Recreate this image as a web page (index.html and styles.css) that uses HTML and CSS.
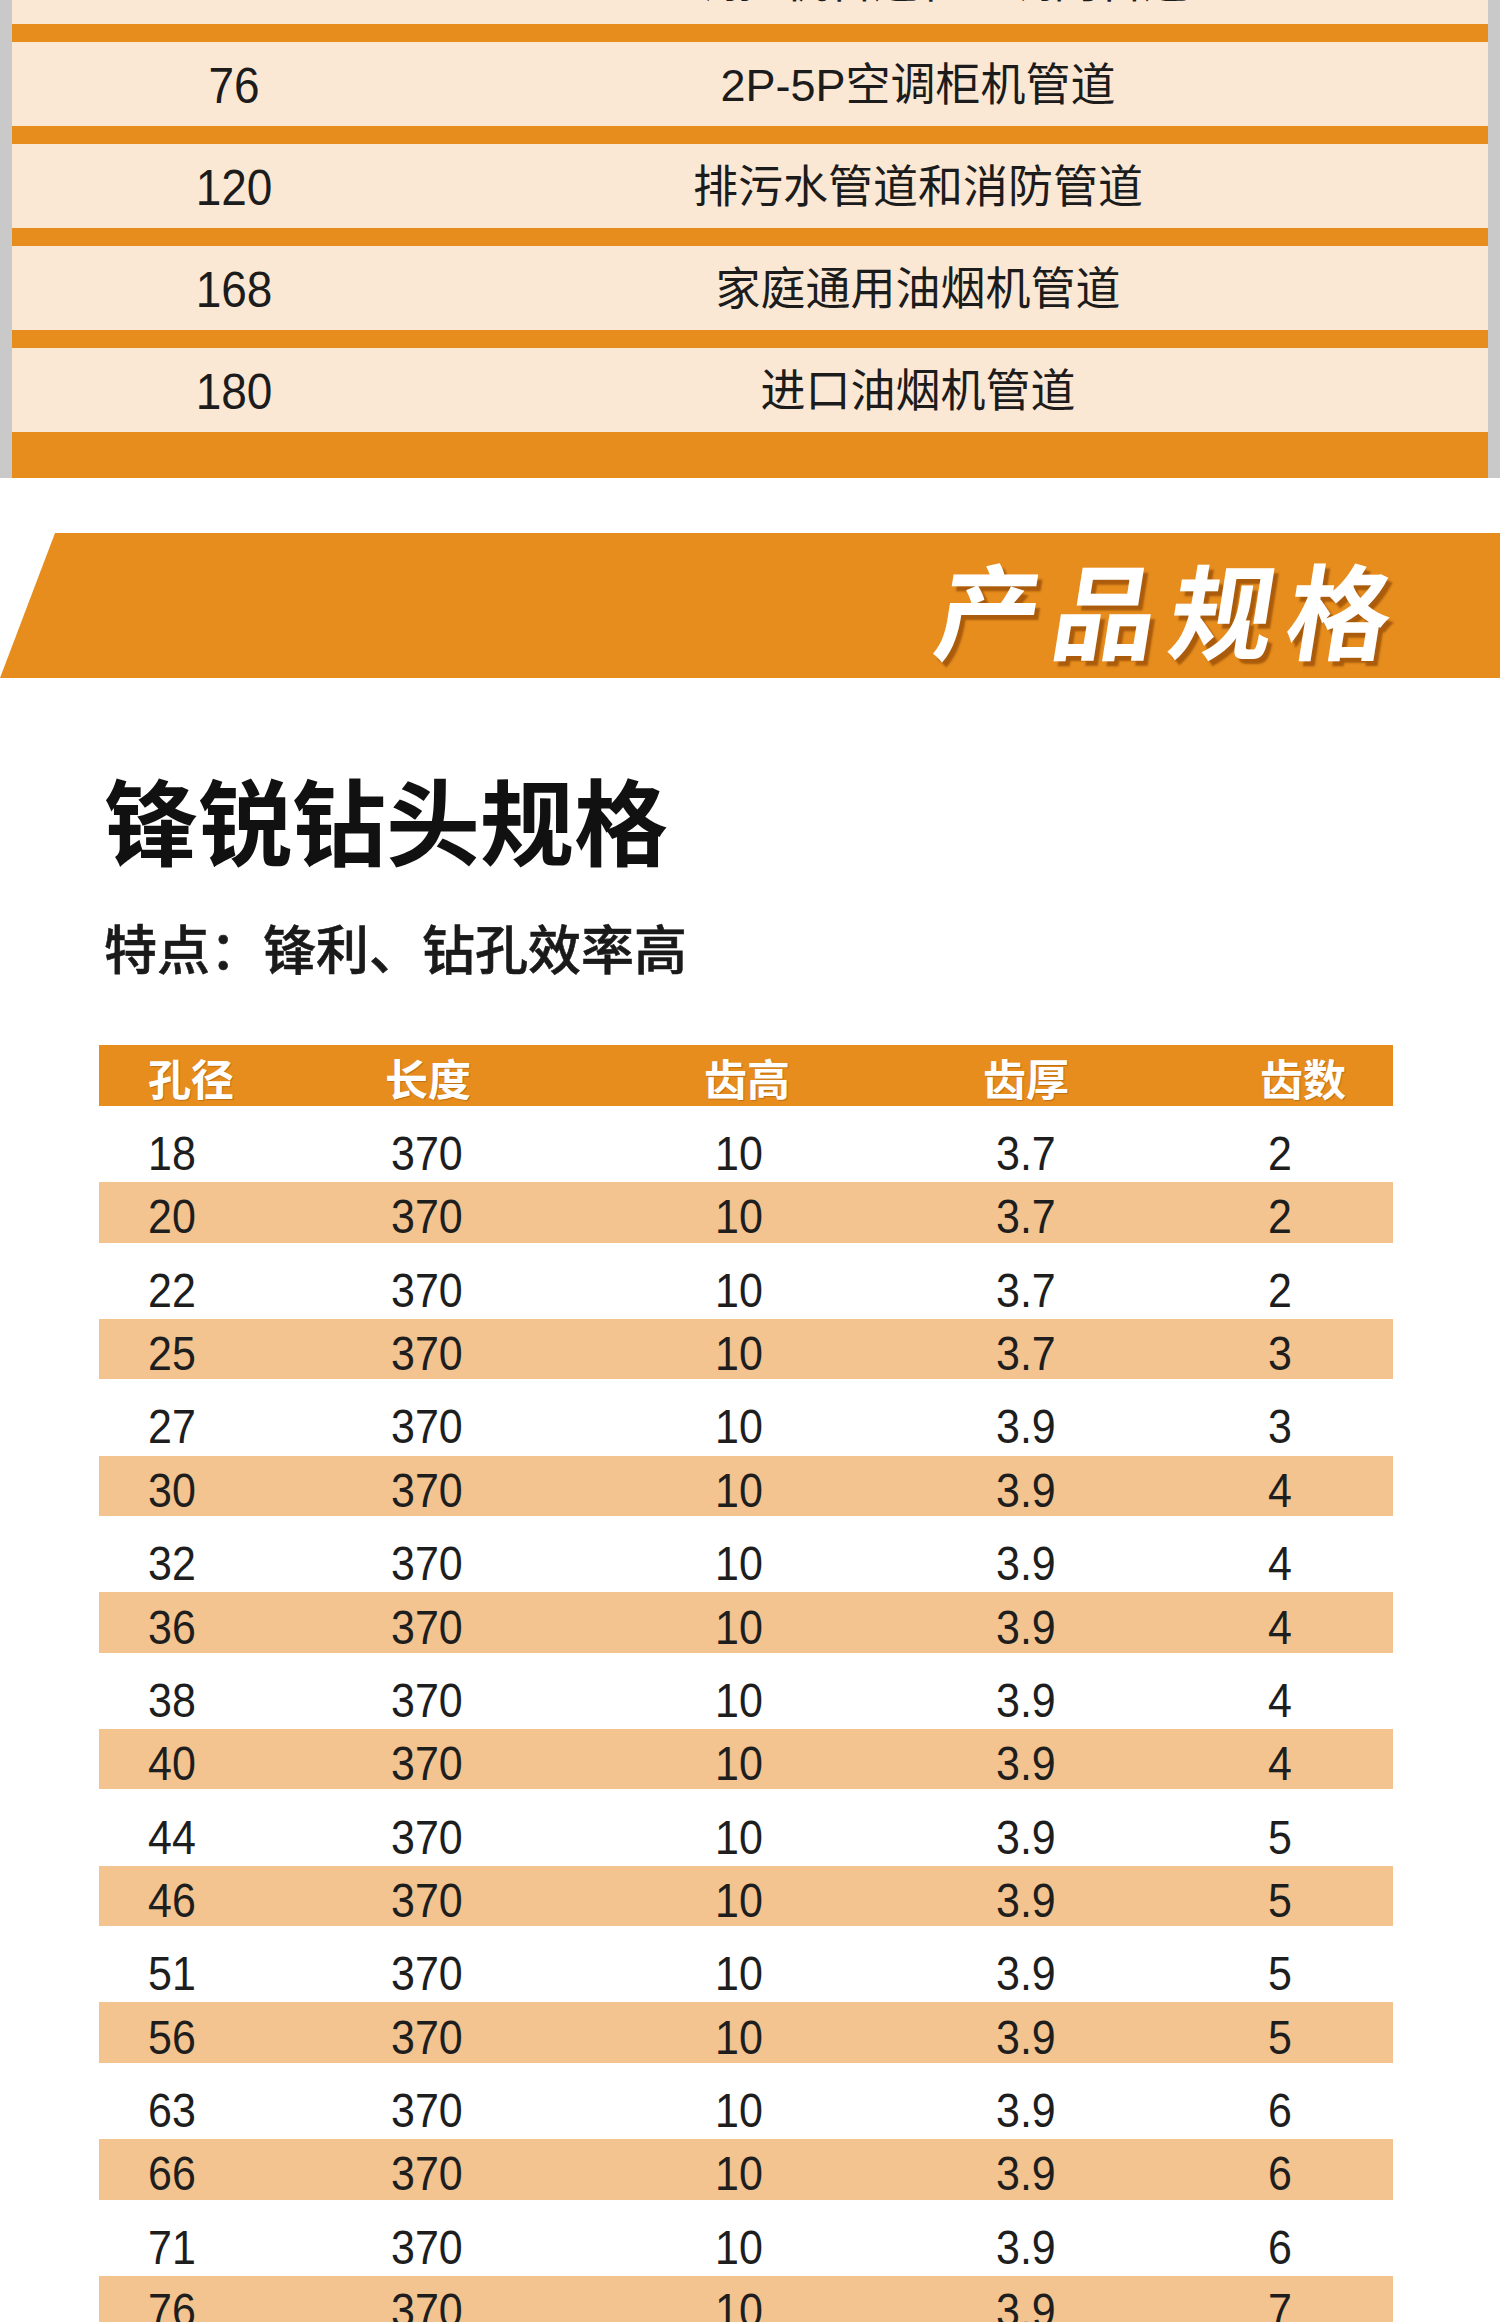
FILE: index.html
```html
<!DOCTYPE html>
<html lang="zh-CN">
<head>
<meta charset="utf-8">
<title>产品规格</title>
<link rel="stylesheet" href="styles.css">
</head>
<body>
<section class="usage">
  <div class="usage-inner">
    <div class="u-row u-row--cut"><div class="u-num">50/63</div><div class="u-desc">空调挂机管道和空调内管道</div></div>
    <div class="u-sep"></div>
    <div class="u-row"><div class="u-num">76</div><div class="u-desc">2P-5P空调柜机管道</div></div>
    <div class="u-sep"></div>
    <div class="u-row"><div class="u-num">120</div><div class="u-desc">排污水管道和消防管道</div></div>
    <div class="u-sep"></div>
    <div class="u-row"><div class="u-num">168</div><div class="u-desc">家庭通用油烟机管道</div></div>
    <div class="u-sep"></div>
    <div class="u-row"><div class="u-num">180</div><div class="u-desc">进口油烟机管道</div></div>
    <div class="u-foot"></div>
  </div>
</section>

<div class="banner"><h2 class="banner-title">产品规格</h2></div>

<section class="spec">
  <h1 class="spec-title">锋锐钻头规格</h1>
  <p class="spec-sub">特点：锋利、钻孔效率高</p>

  <div class="table">
    <div class="thead">
      <div>孔径</div><div>长度</div><div>齿高</div><div>齿厚</div><div>齿数</div>
    </div>
    <div class="tr"><span>18</span><span>370</span><span>10</span><span>3.7</span><span>2</span></div>
    <div class="tr alt"><span>20</span><span>370</span><span>10</span><span>3.7</span><span>2</span></div>
    <div class="tr"><span>22</span><span>370</span><span>10</span><span>3.7</span><span>2</span></div>
    <div class="tr alt"><span>25</span><span>370</span><span>10</span><span>3.7</span><span>3</span></div>
    <div class="tr"><span>27</span><span>370</span><span>10</span><span>3.9</span><span>3</span></div>
    <div class="tr alt"><span>30</span><span>370</span><span>10</span><span>3.9</span><span>4</span></div>
    <div class="tr"><span>32</span><span>370</span><span>10</span><span>3.9</span><span>4</span></div>
    <div class="tr alt"><span>36</span><span>370</span><span>10</span><span>3.9</span><span>4</span></div>
    <div class="tr"><span>38</span><span>370</span><span>10</span><span>3.9</span><span>4</span></div>
    <div class="tr alt"><span>40</span><span>370</span><span>10</span><span>3.9</span><span>4</span></div>
    <div class="tr"><span>44</span><span>370</span><span>10</span><span>3.9</span><span>5</span></div>
    <div class="tr alt"><span>46</span><span>370</span><span>10</span><span>3.9</span><span>5</span></div>
    <div class="tr"><span>51</span><span>370</span><span>10</span><span>3.9</span><span>5</span></div>
    <div class="tr alt"><span>56</span><span>370</span><span>10</span><span>3.9</span><span>5</span></div>
    <div class="tr"><span>63</span><span>370</span><span>10</span><span>3.9</span><span>6</span></div>
    <div class="tr alt"><span>66</span><span>370</span><span>10</span><span>3.9</span><span>6</span></div>
    <div class="tr"><span>71</span><span>370</span><span>10</span><span>3.9</span><span>6</span></div>
    <div class="tr alt"><span>76</span><span>370</span><span>10</span><span>3.9</span><span>7</span></div>
  </div>
</section>
</body>
</html>
```

FILE: styles.css
```css
* { box-sizing: border-box; }

html, body {
  margin: 0;
  padding: 0;
  background: #ffffff;
}

body {
  width: 1500px;
  font-family: "Liberation Sans", "Noto Sans CJK SC", sans-serif;
  color: #1e1e1e;
}

/* ---------- top usage table ---------- */
.usage {
  background: #c9c9c9;
  padding: 0 12px;
  overflow: hidden;
}

.usage-inner {
  background: #fbe8d4;
}

.u-row {
  height: 84px;
  display: grid;
  grid-template-columns: 444px 924px 1fr;
  align-items: center;
  padding-top: 4px;
  font-size: 46px;
  line-height: 46px;
  color: #1c1c1c;
}

.u-row--cut {
  margin-top: -61px;
}

.u-num,
.u-desc {
  text-align: center;
  white-space: nowrap;
}

.u-num {
  display: inline-block;
  justify-self: center;
  transform: scaleY(1.08);
}

.u-desc {
  font-size: 45px;
}

.u-sep {
  height: 18px;
  background: #e68d1e;
}

.u-row--cut + .u-sep {
  margin-top: 1px;
}

.u-foot {
  height: 46px;
  background: #e68d1e;
}

/* ---------- banner ---------- */
.banner {
  margin-top: 55px;
  height: 145px;
  background: #e68d1e;
  clip-path: polygon(55px 0, 100% 0, 100% 100%, 0 100%);
  display: flex;
  justify-content: flex-end;
  align-items: center;
  padding: 2px 94px 0 0;
}

.banner-title {
  margin: 0;
  font-family: "Noto Sans CJK SC", sans-serif;
  font-weight: 700;
  font-size: 104px;
  line-height: 104px;
  letter-spacing: 13px;
  color: #ffffff;
  display: inline-block;
  transform: skewX(-9deg);
  text-shadow: 5px 5px 2px rgba(150, 75, 5, 0.75);
}

/* ---------- spec section ---------- */
.spec {
  padding: 0 107px 0 99px;
}

.spec-title {
  margin: 93px 0 0 5px;
  font-family: "Noto Sans CJK SC", sans-serif;
  font-weight: 700;
  font-size: 94px;
  line-height: 94px;
  color: #111111;
}

.spec-sub {
  margin: 56px 0 0 5px;
  font-family: "Noto Sans CJK SC", sans-serif;
  font-weight: 500;
  font-size: 53px;
  line-height: 53px;
  color: #1a1a1a;
  -webkit-text-stroke: 0.6px #1a1a1a;
}

.table {
  margin-top: 71px;
  width: 1294px;
}

.thead {
  height: 61px;
  background: #e68d1e;
  display: grid;
  grid-template-columns: 237px 319px 279px 277px 1fr;
  align-items: center;
  padding: 3px 0 0 49px;
  font-family: "Noto Sans CJK SC", sans-serif;
  font-weight: 700;
  font-size: 43px;
  line-height: 43px;
  color: #ffffff;
  text-shadow: 1px 1px 1px rgba(120, 60, 0, 0.35);
}

.tr {
  height: 76.2px;
  display: grid;
  grid-template-columns: 243px 324px 281px 272px 1fr;
  align-items: center;
  padding: 21px 0 0 49px;
  font-size: 43px;
  line-height: 43px;
  color: #1e1e1e;
}

.tr.alt {
  height: 60.5px;
  padding-top: 11px;
  background: #f3c48f;
}

.tr span {
  display: inline-block;
  justify-self: start;
  transform: scaleY(1.1);
}
```
